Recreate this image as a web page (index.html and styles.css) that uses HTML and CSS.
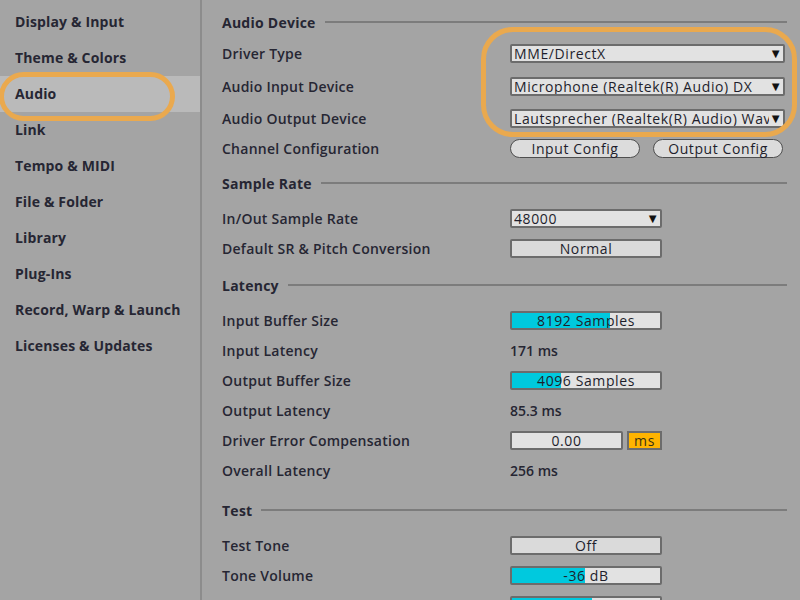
FILE: index.html
```html
<!DOCTYPE html>
<html lang="en">
<head>
  <meta charset="UTF-8" />
  <title>Preferences - Audio</title>
  <link rel="stylesheet" href="styles.css">
</head>
<body>

  <div class="prefs">
    <nav class="sidebar">
      <div class="tab">Display &amp; Input</div>
      <div class="tab">Theme &amp; Colors</div>
      <div class="tab active">Audio</div>
      <div class="tab">Link</div>
      <div class="tab">Tempo &amp; MIDI</div>
      <div class="tab">File &amp; Folder</div>
      <div class="tab">Library</div>
      <div class="tab">Plug-Ins</div>
      <div class="tab">Record, Warp &amp; Launch</div>
      <div class="tab">Licenses &amp; Updates</div>
    </nav>

    <main class="panel">
      <section class="section first">
        <div class="section-title"><span>Audio Device</span></div>
        <div class="row drop">
          <div class="label">Driver Type</div>
          <div class="select wide"><span>MME/DirectX</span><i>▼</i></div>
        </div>
        <div class="row drop mid">
          <div class="label">Audio Input Device</div>
          <div class="select wide"><span>Microphone (Realtek(R) Audio) DX</span><i>▼</i></div>
        </div>
        <div class="row">
          <div class="label">Audio Output Device</div>
          <div class="select wide"><span>Lautsprecher (Realtek(R) Audio) Wave</span><i>▼</i></div>
        </div>
        <div class="row">
          <div class="label">Channel Configuration</div>
          <div class="pills">
            <button class="pill">Input Config</button>
            <button class="pill">Output Config</button>
          </div>
        </div>
      </section>

      <section class="section">
        <div class="section-title"><span>Sample Rate</span></div>
        <div class="row">
          <div class="label">In/Out Sample Rate</div>
          <div class="select"><span>48000</span><i>▼</i></div>
        </div>
        <div class="row">
          <div class="label">Default SR &amp; Pitch Conversion</div>
          <div class="box">Normal</div>
        </div>
      </section>

      <section class="section latency">
        <div class="section-title"><span>Latency</span></div>
        <div class="row">
          <div class="label">Input Buffer Size</div>
          <div class="box slider"><b style="width: 66%"></b><span>8192 Samples</span></div>
        </div>
        <div class="row">
          <div class="label">Input Latency</div>
          <div class="value">171 ms</div>
        </div>
        <div class="row">
          <div class="label">Output Buffer Size</div>
          <div class="box slider"><b style="width: 33%"></b><span>4096 Samples</span></div>
        </div>
        <div class="row">
          <div class="label">Output Latency</div>
          <div class="value">85.3 ms</div>
        </div>
        <div class="row">
          <div class="label">Driver Error Compensation</div>
          <div class="comp">
            <div class="box short">0.00</div>
            <div class="unit">ms</div>
          </div>
        </div>
        <div class="row">
          <div class="label">Overall Latency</div>
          <div class="value">256 ms</div>
        </div>
      </section>

      <section class="section last">
        <div class="section-title"><span>Test</span></div>
        <div class="row">
          <div class="label">Test Tone</div>
          <div class="box">Off</div>
        </div>
        <div class="row">
          <div class="label">Tone Volume</div>
          <div class="box slider"><b style="width: 49%"></b><span>-36 dB</span></div>
        </div>
        <div class="row">
          <div class="label">Tone Frequency</div>
          <div class="box slider"><b style="width: 54%"></b><span>440 Hz</span></div>
        </div>
      </section>
    </main>
  </div>

  <!-- annotation marks -->
  <div class="mark mark-tab"></div>
  <div class="mark mark-devices"></div>

</body>
</html>
```

FILE: styles.css
```css
html, body {
  margin: 0;
  height: 100%;
}

body {
  background: #a4a4a4;
  font-family: 'Open Sans', 'Liberation Sans', sans-serif;
  color: #262633;
  overflow: hidden;
  position: relative;
}

.prefs {
  display: flex;
  height: 600px;
}

.sidebar {
  width: 200px;
  border-right: 2px solid #8c8c8c;
  padding-top: 4px;
  flex-shrink: 0;
}

.tab {
  height: 36px;
  line-height: 36px;
  padding-left: 15px;
  font-size: 14px;
  font-weight: 700;
  letter-spacing: 0.15px;
  white-space: nowrap;
}

.tab.active {
  background: #bababa;
}

.panel {
  flex: 1;
  padding: 7px 13px 0 20px;
  font-size: 14px;
  font-weight: 600;
  letter-spacing: 0.25px;
}

.section {
  margin-top: 5px;
}

.section.first {
  margin-top: 0;
}

.section.latency {
  margin-top: 7px;
}

.section.last {
  margin-top: 10px;
}

.section-title {
  display: flex;
  align-items: center;
  height: 30px;
  font-weight: 700;
  gap: 9px;
}

.section-title::after {
  content: '';
  flex: 1;
  height: 2px;
  background: #7c7c7c;
}

.section-title + .row {
  margin-top: 5px;
}

.section.first .section-title + .row {
  margin-top: 0;
}

.row {
  display: flex;
  align-items: center;
  height: 30px;
}

.row.drop {
  height: 32px;
}

.row.drop.mid {
  height: 34px;
}

.label {
  width: 288px;
  flex-shrink: 0;
  white-space: nowrap;
}

.value {
  font-weight: 600;
  letter-spacing: 0;
}

.select, .box, .pill, .unit {
  font-family: 'Open Sans', 'Liberation Sans', sans-serif;
  font-size: 14px;
  font-weight: 500;
  letter-spacing: 0.6px;
  color: #1e1e2c;
  line-height: 15px;
}

.select, .box {
  box-sizing: border-box;
  width: 152px;
  height: 19px;
  background: #e2e2e2;
  border: 2px solid #6c6c6c;
  border-radius: 2px;
  white-space: nowrap;
}

.select {
  display: flex;
  align-items: center;
  padding-left: 2px;
  overflow: hidden;
}

.select span {
  flex: 1;
  overflow: hidden;
}

.select i {
  font-style: normal;
  font-size: 13px;
  letter-spacing: 0;
  padding: 0 1px 0 0;
  color: #111;
}

.select.wide {
  width: 275px;
}

.box {
  text-align: center;
  background: #dadada;
}

.slider {
  position: relative;
  background: #e2e2e2;
  overflow: hidden;
}

.slider b {
  position: absolute;
  left: 0;
  top: 0;
  bottom: 0;
  background: #00c9de;
}

.slider span {
  position: relative;
}

.pills {
  display: flex;
  gap: 13px;
}

.pill {
  box-sizing: border-box;
  width: 130px;
  height: 19px;
  padding: 0;
  background: #dcdcdc;
  border: 1.5px solid #4e4e4e;
  border-radius: 10px;
}

.comp {
  display: flex;
  gap: 4px;
}

.box.short {
  width: 113px;
  background: #e2e2e2;
}

.unit {
  box-sizing: border-box;
  width: 35px;
  height: 19px;
  background: #ffb400;
  border: 2px solid #6c6c6c;
  text-align: center;
  color: #3a3210;
}

.mark {
  position: absolute;
  border: 5px solid #eaa94e;
  pointer-events: none;
}

.mark-tab {
  left: -1px;
  top: 72px;
  width: 166px;
  height: 39px;
  border-radius: 25px;
}

.mark-devices {
  left: 481px;
  top: 27px;
  width: 306px;
  height: 100px;
  border-radius: 32px;
}
```
